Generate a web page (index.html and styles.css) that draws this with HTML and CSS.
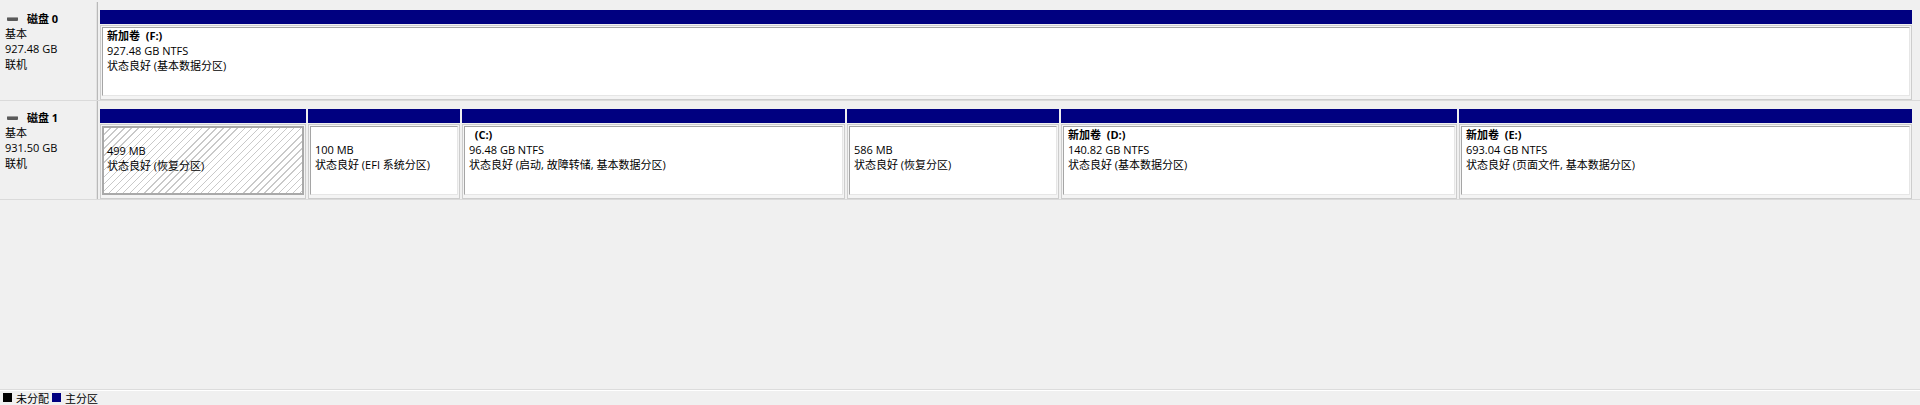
FILE: index.html
```html
<!DOCTYPE html>
<html lang="zh-CN">
<head>
    <meta charset="UTF-8">
    <title>磁盘管理</title>
    <link rel="stylesheet" href="styles.css">
</head>
<body>
<div class="view">
    <!-- 磁盘 0 -->
    <div class="disk">
        <div class="disk-label">
            <div class="disk-name"><span class="disk-icon"></span><b>磁盘 0</b></div>
            <div>基本</div>
            <div>927.48 GB</div>
            <div>联机</div>
        </div>
        <div class="parts parts-d0">
            <div class="part">
                <div class="part-head"></div>
                <div class="part-body">
                    <div class="part-inner">
                        <div class="vol">新加卷  (F:)</div>
                        <div>927.48 GB NTFS</div>
                        <div>状态良好 (基本数据分区)</div>
                    </div>
                </div>
            </div>
        </div>
    </div>

    <!-- 磁盘 1 -->
    <div class="disk">
        <div class="disk-label">
            <div class="disk-name"><span class="disk-icon"></span><b>磁盘 1</b></div>
            <div>基本</div>
            <div>931.50 GB</div>
            <div>联机</div>
        </div>
        <div class="parts parts-d1">
            <div class="part">
                <div class="part-head"></div>
                <div class="part-body">
                    <div class="part-inner hatched">
                        <div class="vol"></div>
                        <div>499 MB</div>
                        <div>状态良好 (恢复分区)</div>
                    </div>
                </div>
            </div>
            <div class="part">
                <div class="part-head"></div>
                <div class="part-body">
                    <div class="part-inner">
                        <div class="vol"></div>
                        <div>100 MB</div>
                        <div>状态良好 (EFI 系统分区)</div>
                    </div>
                </div>
            </div>
            <div class="part">
                <div class="part-head"></div>
                <div class="part-body">
                    <div class="part-inner">
                        <div class="vol">  (C:)</div>
                        <div>96.48 GB NTFS</div>
                        <div>状态良好 (启动, 故障转储, 基本数据分区)</div>
                    </div>
                </div>
            </div>
            <div class="part">
                <div class="part-head"></div>
                <div class="part-body">
                    <div class="part-inner">
                        <div class="vol"></div>
                        <div>586 MB</div>
                        <div>状态良好 (恢复分区)</div>
                    </div>
                </div>
            </div>
            <div class="part">
                <div class="part-head"></div>
                <div class="part-body">
                    <div class="part-inner">
                        <div class="vol">新加卷  (D:)</div>
                        <div>140.82 GB NTFS</div>
                        <div>状态良好 (基本数据分区)</div>
                    </div>
                </div>
            </div>
            <div class="part">
                <div class="part-head"></div>
                <div class="part-body">
                    <div class="part-inner">
                        <div class="vol">新加卷  (E:)</div>
                        <div>693.04 GB NTFS</div>
                        <div>状态良好 (页面文件, 基本数据分区)</div>
                    </div>
                </div>
            </div>
        </div>
    </div>
</div>

<div class="legend">
    <span class="swatch unalloc"></span><span class="legend-text">未分配</span>
    <span class="swatch primary"></span><span class="legend-text">主分区</span>
</div>
</body>
</html>
```

FILE: styles.css
```css
body {
    margin: 0;
    height: 100vh;
    display: flex;
    flex-direction: column;
    background-color: #f0f0f0;
    font-family: "Open Sans", "Noto Sans CJK SC", sans-serif;
    font-size: 11px;
    color: #000000;
}

.view {
    flex: 1;
    padding-top: 2px;
}

.disk {
    display: flex;
    height: 98px;
    border-bottom: 1px solid #dadada;
}

.disk-label {
    width: 92px;
    padding: 9px 0 0 5px;
    line-height: 15.2px;
    border-right: 1px solid #b9b9b9;
    box-shadow: inset -1px 0 0 #e2e2e2;
}

.disk-name {
    display: flex;
    align-items: center;
    padding-left: 2px;
}

.disk-icon {
    display: inline-block;
    width: 11px;
    height: 3px;
    margin-right: 9px;
    border-radius: 1px;
    background-color: #5a5a5a;
    border-top: 1px solid #9a9a9a;
}

.parts {
    flex: 1;
    display: grid;
    padding: 8px 8px 0 2px;
}

.parts-d0 {
    grid-template-columns: 1fr;
}

.parts-d1 {
    grid-template-columns: 208px 154px 385px 214px 398px 1fr;
}

.part {
    display: flex;
    flex-direction: column;
    margin-right: 2px;
}

.part:last-child {
    margin-right: 0;
}

.part-head {
    height: 14px;
    background-color: #000080;
}

.part-body {
    margin-top: 1px;
    height: 73px;
    border: 1px solid #cdcdcd;
    background-color: #f4f4f4;
}

.part-inner {
    height: 64px;
    margin: 1px;
    padding: 1px 5px 2px 4px;
    border: 1px solid;
    border-color: #a5a5a5 #e6e6e6 #e6e6e6 #a5a5a5;
    background-color: #ffffff;
    line-height: 14.8px;
    white-space: nowrap;
    overflow: hidden;
}

.part-inner.hatched {
    height: 62px;
    border: 2px solid #a9a9a9;
    padding: 1px 4px 2px 3px;
    background: repeating-linear-gradient(135deg, #ffffff 0, #ffffff 4px, #c9c9c9 4px, #c9c9c9 5px);
}

.vol {
    height: 14.8px;
    font-weight: bold;
    white-space: pre;
}

.legend {
    display: flex;
    align-items: center;
    height: 15px;
    padding-left: 3px;
    border-top: 1px solid #dcdcdc;
    box-shadow: inset 0 1px 0 #ffffff;
}

.swatch {
    width: 9px;
    height: 9px;
    margin-right: 4px;
}

.swatch.unalloc {
    background-color: #000000;
}

.swatch.primary {
    background-color: #000080;
}

.legend-text {
    margin-right: 3px;
}
```
